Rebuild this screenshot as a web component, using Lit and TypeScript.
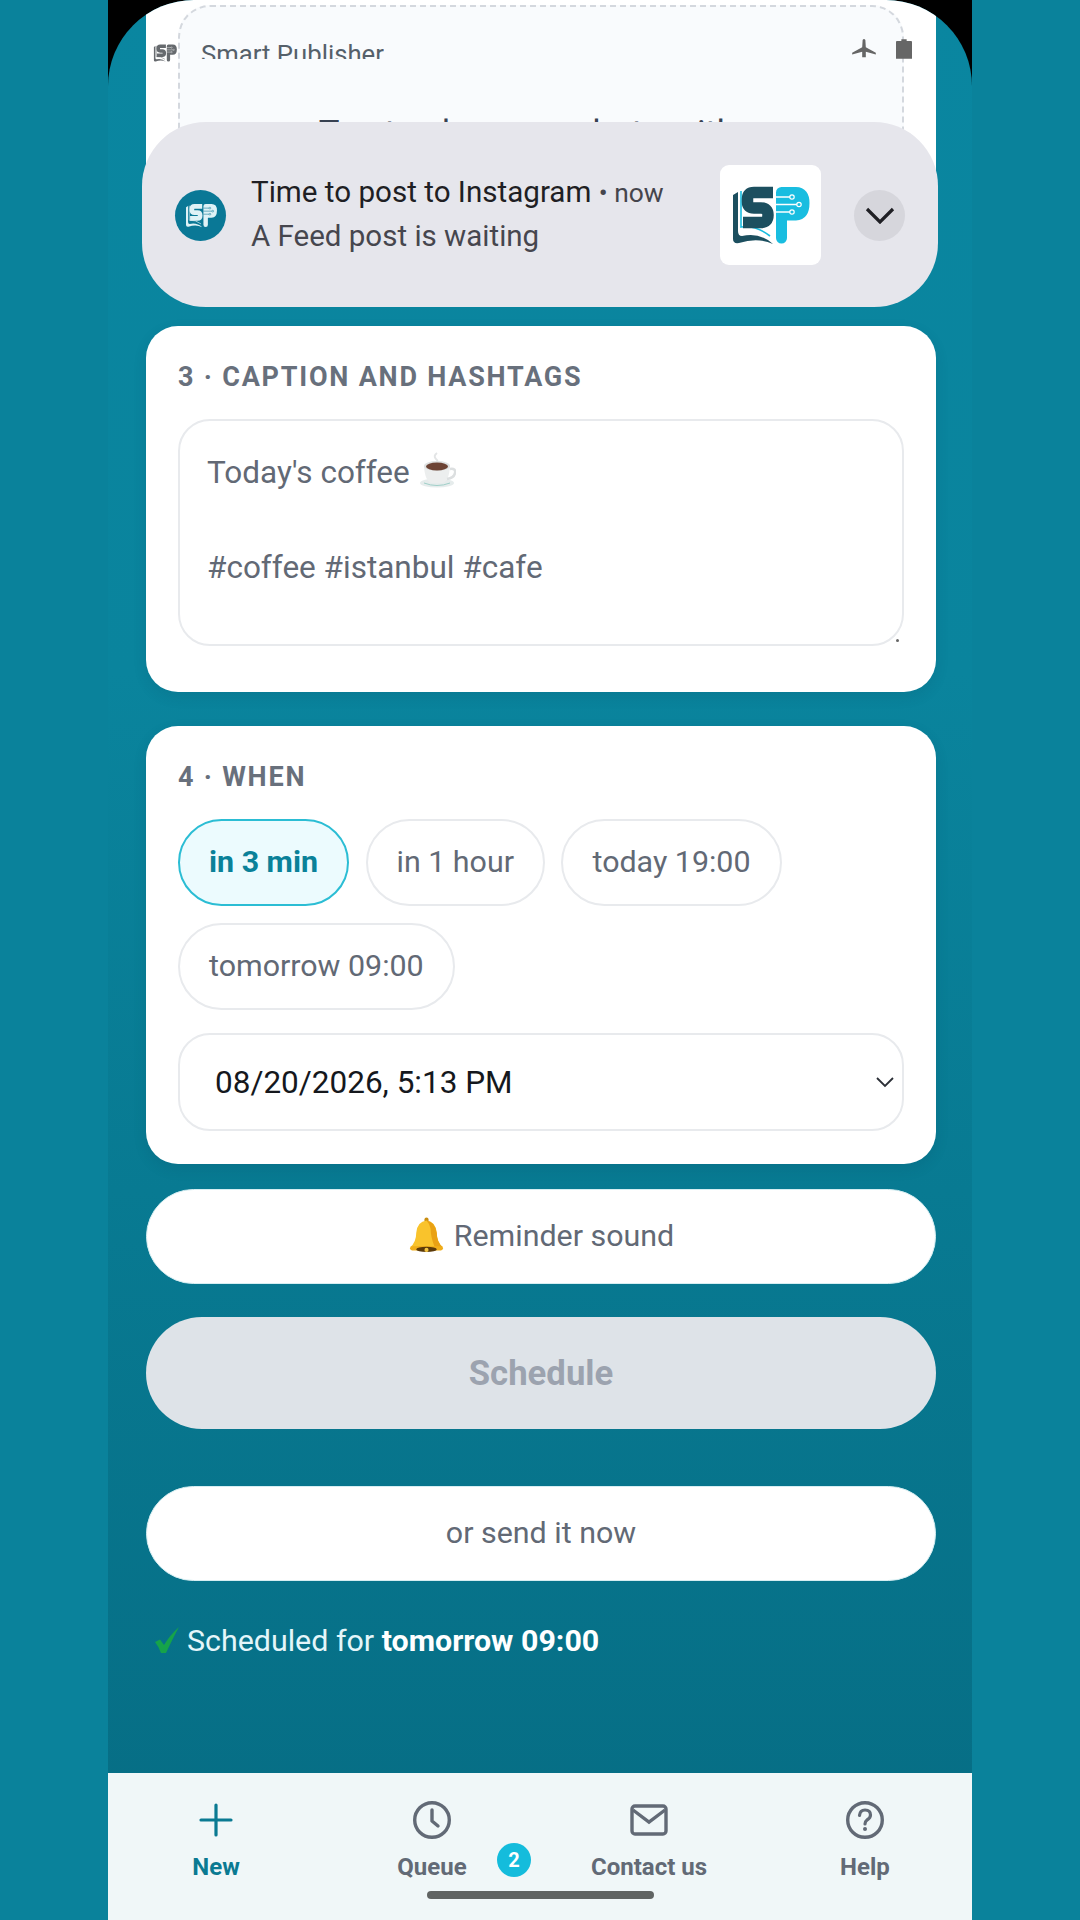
import { LitElement, html, css, svg } from "lit";
import { customElement } from "lit/decorators.js";

const logoMark = (dark: string, light: string, line: string) => svg`
  <path d="M13 30 V74 Q13 79 19 78 Q38 72 53 79 Q40 67 22 71 Q18 71 18 66 V27 Z" fill="${dark}"/>
  <path d="M21 26 V62 Q36 60 50 71" fill="none" stroke="${light}" stroke-width="1.6"/>
  <path d="M53 27.500 H34 Q27.500 27.500 27.500 34 V37 Q27.500 43 34 43 H41 Q48 43 48 50 Q48 57.500 41 57.500 H23" fill="none" stroke="${dark}" stroke-width="11.500"/>
  <path d="M61.500 73 V27.500 H76 Q84 27.500 84 38 Q84 50 76 50 H61.500" fill="${light}" stroke="${light}" stroke-width="11" stroke-linejoin="round" stroke-linecap="round"/>
  <path d="M56 32 H70 M56 39.500 H77 M56 47 H70" stroke="${line}" stroke-width="1.4" fill="none"/>
  <circle cx="72" cy="32" r="2.200" fill="${light}" stroke="${line}" stroke-width="1.200"/>
  <circle cx="79" cy="39.500" r="2.200" fill="${light}" stroke="${line}" stroke-width="1.200"/>
  <circle cx="72" cy="47" r="2.200" fill="${light}" stroke="${line}" stroke-width="1.200"/>
`;

@customElement("app-root")
export class AppRoot extends LitElement {
  static styles = css`
    :host {
      display: block;
      width: 1080px;
      height: 1920px;
      background: #0a829b;
      font-family: Roboto, "Noto Sans", sans-serif;
      overflow: hidden;
    }
    * { box-sizing: border-box; }
    .stage { height: 1920px; padding: 0 108px; }
    .bezel { height: 1920px; background: #000; }
    .phone {
      position: relative;
      height: 1920px;
      border-radius: 86px 86px 0 0;
      overflow: hidden;
      background: linear-gradient(180deg, #0a86a0 0%, #0a849d 35%, #087a92 62%, #066c83 100%);
      display: flex;
      flex-direction: column;
    }
    .scroll {
      flex: 1;
      min-height: 0;
      padding: 0 36px 0 38px;
      display: flex;
      flex-direction: column;
    }
    .card {
      background: #fff;
      border-radius: 32px;
      padding: 32px;
      box-shadow: 0 5px 14px rgba(0, 40, 60, 0.1);
    }
    .card-top {
      height: 243px;
      padding-top: 5px;
      padding-bottom: 0;
      border-radius: 0;
      box-shadow: none;
      margin-bottom: 83px;
      overflow: hidden;
    }
    .dropzone {
      height: 300px;
      border: 2px dashed #d4d8de;
      border-radius: 32px;
      background: #f9fbfd;
      padding-top: 106px;
      text-align: center;
      color: #374151;
      font-size: 34.700px;
      line-height: 40px;
    }
    .caption { height: 366px; margin-bottom: 34px; padding-top: 37px; }
    .when { height: 438px; margin-bottom: 25px; padding-top: 37px; }
    .head {
      font-size: 27px;
      line-height: 29px;
      font-weight: 700;
      letter-spacing: 1.78px;
      color: #68707c;
      margin-bottom: 27px;
    }
    .area {
      position: relative;
      height: 227px;
      border: 2px solid #e8eaed;
      border-radius: 32px;
      padding: 28px 27px;
      font-size: 31.500px;
      line-height: 47.500px;
      color: #626975;
    }
    .emoji { display: inline-block; vertical-align: -6px; margin-left: 2px; }
    .grip {
      position: absolute;
      right: 3px;
      bottom: 2px;
      width: 3px;
      height: 3px;
      border-radius: 50%;
      background: #666;
    }
    .chips { display: flex; flex-wrap: wrap; gap: 17px 16.500px; margin-bottom: 23px; }
    .chip {
      height: 87px;
      border: 2px solid #e8eaed;
      border-radius: 44px;
      padding: 0 29px 2px;
      display: flex;
      align-items: center;
      font-size: 30.400px;
      color: #626975;
      background: #fff;
    }
    .chip.on {
      background: #ecfbfe;
      border-color: #2bbdd4;
      color: #0a8199;
      font-weight: 700;
    }
    .date {
      height: 98px;
      border: 2px solid #e8eaed;
      border-radius: 32px;
      padding: 0 7px 0 35px;
      display: flex;
      align-items: center;
      justify-content: space-between;
      font-size: 31.500px;
      color: #15181d;
    }
    .btn {
      height: 95px;
      border-radius: 48px;
      background: #fff;
      border: 1px solid #d6eef2;
      padding-bottom: 3px;
      display: flex;
      align-items: center;
      justify-content: center;
      gap: 9px;
      font-size: 30.400px;
      color: #626975;
    }
    .btn.primary {
      height: 112px;
      margin: 33px 0 57px;
      border-radius: 56px;
      background: #dee3e8;
      border: none;
      padding-bottom: 0;
      color: #9ca3af;
      font-weight: 700;
      font-size: 34.700px;
    }
    .status {
      margin-top: 41px;
      padding-left: 8px;
      display: flex;
      align-items: center;
      gap: 7px;
      height: 36px;
      font-size: 30.400px;
      color: #e4f6fa;
    }
    .status b { color: #fff; font-weight: 700; }
    .sbar {
      position: absolute;
      left: 45px;
      right: 60px;
      top: 39px;
      display: flex;
      align-items: flex-start;
      justify-content: space-between;
    }
    .sleft { display: flex; align-items: flex-start; gap: 24px; }
    .slogo { display: block; margin-top: 3px; }
    .slabel {
      height: 20px;
      overflow: hidden;
      font-size: 25.700px;
      line-height: 31px;
      color: #55606a;
    }
    .sright { display: flex; gap: 19px; align-items: flex-start; }
    .sright svg { display: block; }
    .notice {
      position: absolute;
      left: 34px;
      right: 34px;
      top: 122px;
      height: 185px;
      border-radius: 64px;
      background: #e6e6ec;
      display: flex;
      align-items: center;
      padding: 0 33px;
    }
    .nicon {
      width: 51px;
      height: 51px;
      margin-top: 1px;
      border-radius: 50%;
      background: #0a7896;
      flex: none;
      display: flex;
      align-items: center;
      justify-content: center;
    }
    .ntext { flex: 1; margin-left: 25px; margin-top: -2px; }
    .ntitle { font-size: 29.600px; padding-top: 4px; line-height: 41px; color: #1f1f24; white-space: nowrap; }
    .ntime { font-size: 26.400px; color: #45454d; }
    .nbody { font-size: 29.500px; line-height: 45px; color: #46464e; }
    .thumb {
      width: 101px;
      height: 100px;
      border-radius: 9px;
      background: #fff;
      flex: none;
      display: block;
      margin-right: 33px;
    }
    .expand {
      width: 51px;
      height: 51px;
      margin-top: 1px;
      border-radius: 50%;
      background: #d6d6dc;
      flex: none;
      display: flex;
      align-items: center;
      justify-content: center;
    }
    .nav {
      height: 147px;
      flex: none;
      background: #f0f7f8;
      display: grid;
      grid-template-columns: 216px 216px 218px 214px;
      position: relative;
    }
    .item {
      position: relative;
      display: flex;
      flex-direction: column;
      align-items: center;
      padding-top: 28px;
      font-size: 24px;
      line-height: 30px;
      font-weight: 700;
      color: #626a76;
    }
    .item svg { display: block; margin-bottom: 13px; }
    .item.on { color: #0a7a92; }
    .badge {
      position: absolute;
      left: 173px;
      top: 70px;
      width: 34px;
      height: 34px;
      border-radius: 50%;
      background: #14bcdc;
      color: #fff;
      font-size: 20px;
      line-height: 34px;
      text-align: center;
    }
    .home {
      position: absolute;
      left: 319px;
      bottom: 21px;
      width: 227px;
      height: 8px;
      border-radius: 4px;
      background: #606463;
    }
  `;

  render() {
    return html`
      <div class="stage"><div class="bezel"><div class="phone">
        <div class="scroll">
          <section class="card card-top">
            <div class="dropzone">Tap to choose a photo with a</div>
          </section>
          <section class="card caption">
            <div class="head">3 · CAPTION AND HASHTAGS</div>
            <div class="area">
              <div>Today's coffee <svg class="emoji" width="36" height="38" viewBox="0 0 36 36">
                <path d="M17 1 Q13 4 16 7 Q19 9 16 12" fill="none" stroke="#e3e5e6" stroke-width="2"/>
                <ellipse cx="17" cy="31" rx="17" ry="4.500" fill="#e6ecec"/>
                <path d="M4 31 Q17 36 30 31" fill="none" stroke="#9fcfc8" stroke-width="1"/>
                <path d="M4 14 Q5 30 12 31 H22 Q29 30 30 14 Z" fill="#eceeee"/>
                <path d="M30 17 Q36 16 35 21 Q34 26 27 27" fill="none" stroke="#dcdfe0" stroke-width="2.500"/>
                <ellipse cx="17" cy="14" rx="13" ry="5" fill="#dfe2e2"/>
                <ellipse cx="17" cy="14.500" rx="11" ry="4" fill="#6d4435"/>
              </svg></div>
              <div>&nbsp;</div>
              <div>#coffee #istanbul #cafe</div>
              <span class="grip"></span>
            </div>
          </section>
          <section class="card when">
            <div class="head">4 · WHEN</div>
            <div class="chips">
              <div class="chip on">in 3 min</div>
              <div class="chip">in 1 hour</div>
              <div class="chip">today 19:00</div>
              <div class="chip">tomorrow 09:00</div>
            </div>
            <div class="date">
              <span>08/20/2026, 5:13 PM</span>
              <svg width="20" height="14" viewBox="0 0 20 14"><path d="M2 3 L10 11 L18 3" fill="none" stroke="#2b2f36" stroke-width="1.800"/></svg>
            </div>
          </section>
          <div class="btn">
            <svg width="37" height="38" viewBox="0 0 36 36">
              <rect x="16" y="1" width="4" height="5" rx="2" fill="#c98d10"/>
              <path d="M18 4 Q9 5 8 16 Q8 25 2 30 H34 Q28 25 28 16 Q27 5 18 4 Z" fill="#f9c32c"/>
              <path d="M18 4 Q26 5 28 16 Q28 25 34 30 H26 Q22 20 22 12 Q21 7 18 4 Z" fill="#e9a114"/>
              <rect x="2" y="29" width="32" height="4" rx="2" fill="#f0ad1a"/>
              <ellipse cx="18" cy="32" rx="10" ry="2.500" fill="#5b3a0a"/>
              <circle cx="18" cy="32.500" r="2" fill="#f4c542"/>
            </svg>
            <span>Reminder sound</span>
          </div>
          <div class="btn primary">Schedule</div>
          <div class="btn">or send it now</div>
          <div class="status">
            <svg width="26" height="27" viewBox="0 0 26 27"><path d="M1 15 L6 12.500 L10 18 Q16 8 25 0 Q19 11 12 26 H7 Q5 20 1 15 Z" fill="#16a34a"/></svg>
            <span>Scheduled for <b>tomorrow 09:00</b></span>
          </div>
        </div>
        <nav class="nav">
          <div class="item on">
            <svg width="38" height="38" viewBox="0 0 38 38"><path d="M19 4 V34 M4 19 H34" stroke="#0a7a92" stroke-width="3.200" stroke-linecap="round" fill="none"/></svg>
            New
          </div>
          <div class="item">
            <svg width="38" height="38" viewBox="0 0 38 38"><circle cx="19" cy="19" r="17.300" fill="none" stroke="#626a76" stroke-width="3.400"/><path d="M19 9 V20 L25 25" fill="none" stroke="#626a76" stroke-width="3.400" stroke-linecap="round" stroke-linejoin="round"/></svg>
            Queue
            <span class="badge">2</span>
          </div>
          <div class="item">
            <svg width="38" height="38" viewBox="0 0 38 38"><rect x="2" y="5" width="34" height="28" rx="3" fill="none" stroke="#626a76" stroke-width="3.400"/><path d="M3 9 L19 21 L35 9" fill="none" stroke="#626a76" stroke-width="3.400"/></svg>
            Contact us
          </div>
          <div class="item">
            <svg width="38" height="38" viewBox="0 0 38 38"><circle cx="19" cy="19" r="17.300" fill="none" stroke="#626a76" stroke-width="3.400"/><path d="M13.500 14.500 Q14 9 19 9 Q24.500 9 24.500 14 Q24.500 17 21 19 Q19 20.500 19 23" fill="none" stroke="#626a76" stroke-width="3.200" stroke-linecap="round"/><circle cx="19" cy="28" r="2" fill="#626a76"/></svg>
            Help
          </div>
          <span class="home"></span>
        </nav>
        <div class="sbar">
          <div class="sleft">
            <svg class="slogo" width="24" height="22" viewBox="10 18 80 64">${logoMark("#666a6e", "#666a6e", "#fff")}</svg>
            <div class="slabel">Smart Publisher</div>
          </div>
          <div class="sright">
            <svg width="26" height="20" viewBox="0 0 28 22"><path d="M12.500 1 Q14 -1 15.500 1 L16 9 L27 15 V17 L16 14 V20 H12 V14 L1 17 V15 L12 9 Z" fill="#666"/></svg>
            <svg width="16" height="20" viewBox="0 0 18 22"><path d="M6 0 H12 V2 H17 Q18 2 18 3 V22 H0 V3 Q0 2 1 2 H6 Z" fill="#666"/></svg>
          </div>
        </div>
        <div class="notice">
          <div class="nicon"><svg width="34" height="34" viewBox="8 14 84 70">${logoMark("#dff2f6", "#dff2f6", "#0a7896")}</svg></div>
          <div class="ntext">
            <div class="ntitle">Time to post to Instagram <span class="ntime">• now</span></div>
            <div class="nbody">A Feed post is waiting</div>
          </div>
          <svg class="thumb" viewBox="0 0 101 100">${logoMark("#1c4f5f", "#19bde0", "#fff")}</svg>
          <div class="expand"><svg width="30" height="18" viewBox="0 0 30 18"><path d="M2 3 L15 16 L28 3" fill="none" stroke="#1f1f24" stroke-width="3.200"/></svg></div>
        </div>
      </div></div></div>
    `;
  }
}
